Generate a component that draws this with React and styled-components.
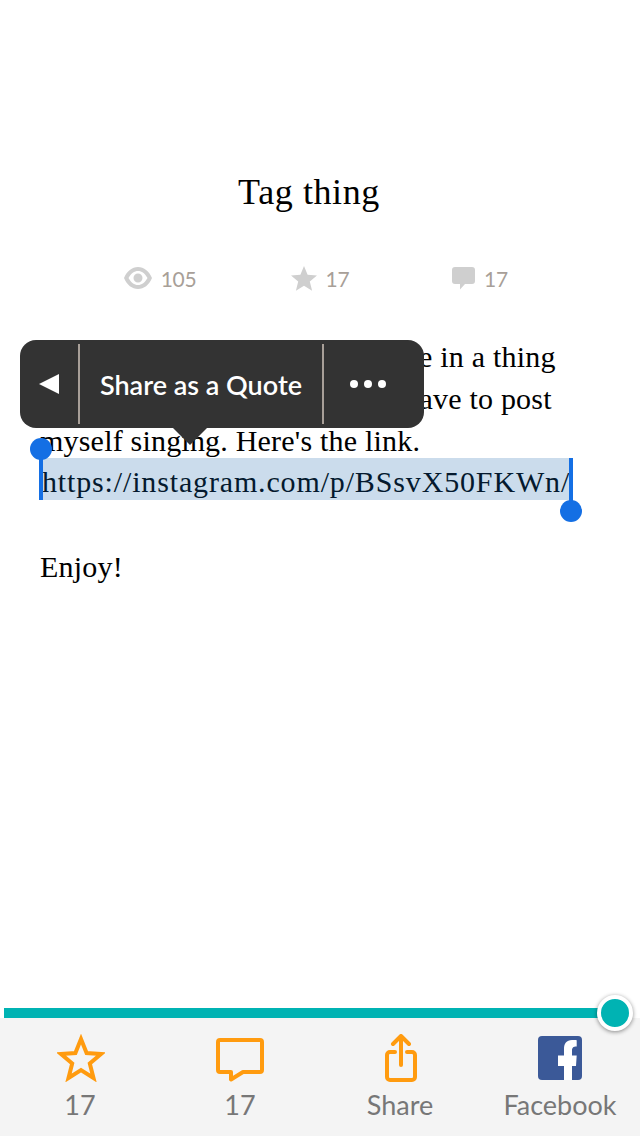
import React from "react";
import styled, { createGlobalStyle } from "styled-components";

const GlobalStyle = createGlobalStyle`
  html, body { margin: 0; padding: 0; background: #fff; }
  #root { width: 640px; height: 1136px; overflow: hidden; }
`;

const Page = styled.div`
  width: 640px;
  height: 1136px;
  display: flex;
  flex-direction: column;
  background: #fff;
`;

const Article = styled.main`
  flex: 1;
  padding: 170px 40px 0;
  display: flex;
  flex-direction: column;
`;

const Title = styled.h1`
  margin: 0;
  padding-right: 22px;
  font: 400 36px/44px "Liberation Serif", Georgia, serif;
  letter-spacing: 0.6px;
  color: #000;
  text-align: center;
`;

const Stats = styled.div`
  margin-top: 42px;
  display: grid;
  grid-template-columns: repeat(3, 160px);
  justify-content: center;
`;

const Stat = styled.div`
  display: flex;
  align-items: center;
  justify-content: center;
  gap: 9px;
  height: 44px;
  font: 400 21px "Lato", sans-serif;
  letter-spacing: -0.3px;
  color: #a89f98;
`;

const Body = styled.div`
  position: relative;
  margin-top: 36px;
  font: 400 30px/42px "Liberation Serif", Georgia, serif;
  letter-spacing: 0.2px;
  color: #000;
  white-space: nowrap;
`;

const Line = styled.div`
  display: flow-root;
  height: 42px;
`;

const Selected = styled.span`
  position: relative;
  display: block;
  height: 42px;
  margin: -4px 0 0 2px;
  width: 528px;
  line-height: 48px;
  letter-spacing: 0.85px;
  background: #cbdcec;
  color: #04192e;
`;

const Stem = styled.i`
  position: absolute;
  top: ${(p) => (p.$end ? 0 : "-9px")};
  ${(p) => (p.$end ? "right: -3px;" : "left: -3px;")}
  width: 4px;
  height: ${(p) => (p.$end ? 52 : 51)}px;
  background: #146fe4;
`;

const Knob = styled.i`
  position: absolute;
  width: 22px;
  height: 22px;
  border-radius: 50%;
  background: #146fe4;
  ${(p) => (p.$end ? "right: -12px; bottom: -22px;" : "left: -12px; top: -20px;")}
`;

const Popover = styled.div`
  position: absolute;
  left: -20px;
  top: 4px;
  width: 404px;
  height: 88px;
  box-sizing: border-box;
  display: flex;
  align-items: center;
  border-radius: 16px;
  background: #333;
  color: #fff;
  font: 600 27px "Lato", sans-serif;
  letter-spacing: 0;

  &::after {
    content: "";
    position: absolute;
    left: 153px;
    top: 88px;
    border-left: 17px solid transparent;
    border-right: 17px solid transparent;
    border-top: 17px solid #333;
  }
`;

const PopButton = styled.div`
  height: 80px;
  width: ${(p) => p.$w}px;
  box-sizing: border-box;
  display: flex;
  align-items: center;
  justify-content: center;
  ${(p) => p.$divider && "border-right: 2px solid #a89f98;"}
`;

const Dots = styled.div`
  display: flex;
  gap: 6px;
  margin-left: -12px;

  i {
    width: 8px;
    height: 8px;
    border-radius: 50%;
    background: #fff;
  }
`;

const Progress = styled.div`
  position: relative;
  height: 10px;
  margin-left: 4px;
  width: 611px;
  background: #00b3b3;
`;

const ProgressKnob = styled.div`
  position: absolute;
  right: -18px;
  top: -13px;
  width: 36px;
  height: 36px;
  box-sizing: border-box;
  border: 4px solid #fff;
  border-radius: 50%;
  background: #00b3b3;
  box-shadow: 0 1px 4px rgba(0, 0, 0, 0.45);
`;

const Dock = styled.nav`
  height: 118px;
  display: grid;
  grid-template-columns: repeat(4, 160px);
  background: #f4f4f4;
`;

const DockItem = styled.div`
  display: flex;
  flex-direction: column;
  align-items: center;
  font: 400 27px "Lato", sans-serif;
  color: #777;
`;

const IconSlot = styled.div`
  height: 64px;
  margin-bottom: 6px;
  display: flex;
  align-items: flex-end;
  justify-content: center;
  padding-bottom: ${(p) => p.$lift || 0}px;
  padding-left: ${(p) => p.$nudge || 0}px;
  box-sizing: border-box;
`;

const EyeIcon = () => (
  <svg width="28" height="22" viewBox="0 0 28 22">
    <path fillRule="evenodd" fill="#cfcfcf" d="M14 0C8 0 3 4 0 11c3 7 8 11 14 11s11-4 14-11C25 4 20 0 14 0zm0 4c3.800 0 7 2.600 9.500 7-2.500 4.400-5.700 7-9.500 7s-7-2.600-9.500-7C7 6.600 10.200 4 14 4zm0 2.500a4.500 4.500 0 1 0 0 9 4.500 4.500 0 0 0 0-9z" />
  </svg>
);

const StarIcon = () => (
  <svg width="26" height="25" viewBox="0 0 26 25">
    <path fill="#cfcfcf" d="M13 0l3.600 8.800 9.400.7-7.200 6.100 2.300 9.200L13 19.800 4.900 24.800l2.300-9.200L0 9.500l9.400-.7z" />
  </svg>
);

const BubbleIcon = () => (
  <svg width="23" height="23" viewBox="0 0 23 23">
    <path fill="#cfcfcf" d="M3 0h17a3 3 0 0 1 3 3v11a3 3 0 0 1-3 3h-7l-5 5.500V17H3a3 3 0 0 1-3-3V3a3 3 0 0 1 3-3z" />
  </svg>
);

const OutlineStar = () => (
  <svg width="48" height="48" viewBox="0 0 48 48">
    <path fill="none" stroke="#ff9b0f" strokeWidth="4" strokeLinejoin="miter" d="M24 5l5.600 14 14.400 1-11.200 9.500 3.700 14.500L24 36l-12.500 8 3.700-14.500L4 20l14.400-1z" />
  </svg>
);

const OutlineBubble = () => (
  <svg width="48" height="44" viewBox="0 0 48 44">
    <path fill="none" stroke="#ff9b0f" strokeWidth="4" strokeLinejoin="round" d="M4 2h40a2 2 0 0 1 2 2v28a2 2 0 0 1-2 2H27l-12 7.500V34H4a2 2 0 0 1-2-2V4a2 2 0 0 1 2-2z" />
  </svg>
);

const ShareIcon = () => (
  <svg width="32" height="48" viewBox="0 0 32 48">
    <path fill="none" stroke="#ff9b0f" strokeWidth="4" strokeLinecap="round" strokeLinejoin="round" d="M16 2v29M8 10l8-8 8 8M10 18H5a3 3 0 0 0-3 3v22a3 3 0 0 0 3 3h22a3 3 0 0 0 3-3V21a3 3 0 0 0-3-3h-5" />
  </svg>
);

const FacebookIcon = () => (
  <svg width="44" height="44" viewBox="0 0 44 44">
    <rect width="44" height="44" rx="4" fill="#3b5998" />
    <path fill="#fff" d="M34 44V30h4l.7-10.500H34v-5c0-2.500 1-4 4.700-4V4.200C37.700 4 36 4 34 4c-5.500 0-8 3.500-8 9v6.500h-6V30h6v14z" />
  </svg>
);

export default function App() {
  return (
    <Page>
      <GlobalStyle />
      <Article>
        <Title>Tag thing</Title>
        <Stats>
          <Stat><EyeIcon />105</Stat>
          <Stat><StarIcon />17</Stat>
          <Stat><BubbleIcon />17</Stat>
        </Stats>
        <Body>
          <Line>I was tagged by somebody to be in a thing</Line>
          <Line>where I agreed that I actually have to post</Line>
          <Line>myself singing. Here's the link.</Line>
          <Line>
            <Selected>
              https://instagram.com/p/BSsvX50FKWn/
              <Stem />
              <Knob />
              <Stem $end />
              <Knob $end />
            </Selected>
          </Line>
          <Line />
          <Line>Enjoy!</Line>
          <Popover>
            <PopButton $w={60} $divider>
              <svg width="20" height="20" viewBox="0 0 20 20">
                <path fill="#fff" d="M0 10L20 0v20z" />
              </svg>
            </PopButton>
            <PopButton $w={244} $divider>Share as a Quote</PopButton>
            <PopButton $w={100}>
              <Dots><i /><i /><i /></Dots>
            </PopButton>
          </Popover>
        </Body>
      </Article>
      <Progress>
        <ProgressKnob />
      </Progress>
      <Dock>
        <DockItem><IconSlot $nudge={1}><OutlineStar /></IconSlot>17</DockItem>
        <DockItem><IconSlot><OutlineBubble /></IconSlot>17</DockItem>
        <DockItem><IconSlot $nudge={1}><ShareIcon /></IconSlot>Share</DockItem>
        <DockItem><IconSlot $lift={2}><FacebookIcon /></IconSlot>Facebook</DockItem>
      </Dock>
    </Page>
  );
}
